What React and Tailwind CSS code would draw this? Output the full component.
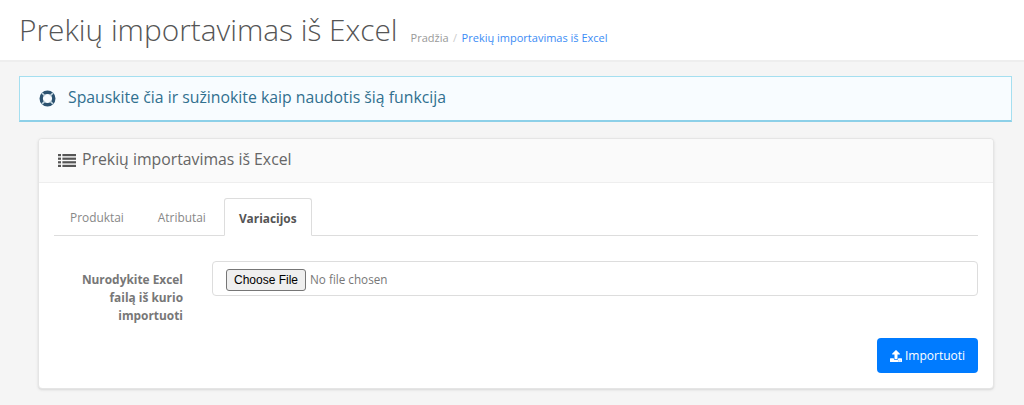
import { FaUpload } from "react-icons/fa";

function LifeRingIcon() {
  return (
    <svg width="17" height="17" viewBox="0 0 17 17" fill="none">
      <circle cx="8.5" cy="8.5" r="6.3" stroke="#2c5270" strokeWidth="3.4" />
      <path d="M3 3L5.9 5.9M14 3L11.1 5.9M3 14L5.9 11.1M14 14L11.1 11.1" stroke="#c3d6e0" strokeWidth="1.6" />
    </svg>
  );
}

function ListIcon() {
  const rows = [0, 3.6, 7.2, 10.8];
  return (
    <svg width="18" height="13" viewBox="0 0 18 13" fill="#555555">
      {rows.map((y) => (
        <g key={y}>
          <rect x="0" y={y} width="3" height="2.2" />
          <rect x="4.4" y={y} width="13.6" height="2.2" />
        </g>
      ))}
    </svg>
  );
}

export default function App() {
  return (
    <div className="min-h-[405px] bg-[#f5f5f5] font-['Open_Sans',sans-serif] overflow-hidden">
      {/* Page title */}
      <div className="h-[62px] bg-white border-b-2 border-[#eeeeee] pl-[19px] flex items-baseline">
        <h1 className="text-[29.8px] leading-[60px] font-light text-[#555555]">Prekių importavimas iš Excel</h1>
        <div className="ml-[13px] text-[11px] flex gap-[4.5px] relative top-[1px]">
          <span className="text-[#999999]">Pradžia</span>
          <span className="text-[#cccccc]">/</span>
          <span className="text-[#3b8cf5]">Prekių importavimas iš Excel</span>
        </div>
      </div>

      <div className="px-[12px] pt-[14px]">
        {/* Help alert */}
        <div className="ml-[7px] h-[46px] bg-[#f8fcff] border border-[#a5dff0] border-b-2 border-b-[#8dd0e8] flex items-center pl-[19px] gap-[12px] text-[#31708f]">
          <LifeRingIcon />
          <span className="text-[15.8px] pb-[2px]">Spauskite čia ir sužinokite kaip naudotis šią funkcija</span>
        </div>

        {/* Card */}
        <div className="ml-[26px] mr-[18px] mt-[16px] bg-white border border-[#e5e5e5] rounded-[4px] shadow-sm">
          <div className="h-[44px] bg-[#fafafa] border-b border-[#eeeeee] rounded-t-[4px] flex items-center pl-[19px] gap-[6px] text-[#666666]">
            <ListIcon />
            <span className="text-[15.8px] leading-[20px] pb-[3px]">Prekių importavimas iš Excel</span>
          </div>

          <div className="px-[15px] pt-[15px] pb-[15px]">
            {/* Tabs */}
            <div className="flex h-[38px] border-b border-[#dddddd] text-[11.9px]">
              <div className="px-[16px] leading-[38px] text-[#888888]">Produktai</div>
              <div className="px-[18px] leading-[38px] text-[#888888]">Atributai</div>
              <div className="px-[14px] h-[38px] leading-[38px] bg-white border border-[#dddddd] border-b-white rounded-t-[3px] font-bold text-[#555555]">Variacijos</div>
            </div>

            {/* Form row */}
            <div className="flex mt-[25px]">
              <label className="w-[129px] pl-[24px] text-right text-[11.9px] leading-[18px] font-bold text-[#777777] pt-[9px]">
                Nurodykite Excel failą iš kurio importuoti
              </label>
              <div className="ml-[29px] flex-1 h-[35px] border border-[#dddddd] rounded-[4px] flex items-center pl-[13px] pt-[3px]">
                <input type="file" className="text-[11.7px] text-[#777777] [&::file-selector-button]:font-['Liberation_Sans'] [&::file-selector-button]:text-[12px] [&::file-selector-button]:text-black [&::file-selector-button]:bg-[#efefef] [&::file-selector-button]:border [&::file-selector-button]:border-[#767676] [&::file-selector-button]:rounded-[3px] [&::file-selector-button]:px-[7px] [&::file-selector-button]:py-[1px] [&::file-selector-button]:mr-[4px]" />
              </div>
            </div>

            <div className="flex justify-end mt-[14px]">
              <button className="w-[101px] h-[35px] bg-[#007bff] hover:bg-[#0069d9] rounded-[4px] text-white text-[12px] flex items-center justify-center gap-[3px]">
                <FaUpload className="text-[12px]" />
                Importuoti
              </button>
            </div>
          </div>
        </div>
      </div>
    </div>
  );
}
